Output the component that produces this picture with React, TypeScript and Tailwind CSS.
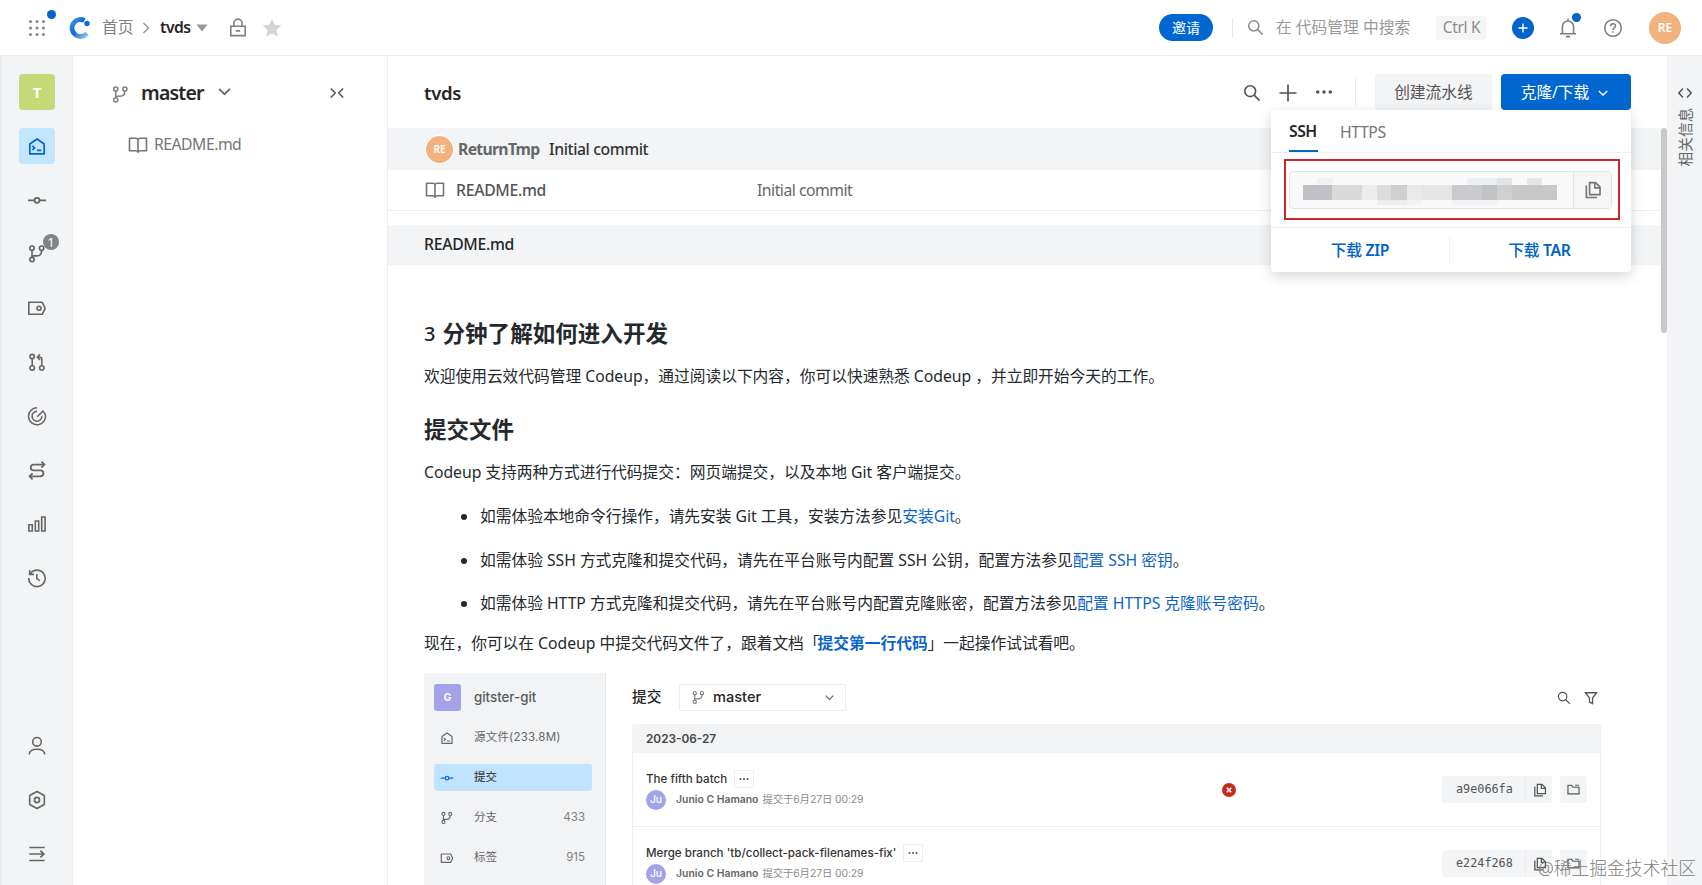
import type { ReactNode } from "react";

type IconProps = { className?: string };

const Svg = ({ className, box = 20, sw = 1.6, children }: { className?: string; box?: number; sw?: number; children: ReactNode }) => (
    <svg
        viewBox={`0 0 ${box} ${box}`}
        className={`shrink-0 ${className ?? "size-5"}`}
        fill="none"
        stroke="currentColor"
        strokeWidth={sw}
    >
        {children}
    </svg>
);

const BranchIcon = ({ className }: IconProps) => (
    <Svg className={className}>
        <circle cx="5" cy="4.2" r="2.2" />
        <circle cx="14.6" cy="4.2" r="2.2" />
        <circle cx="5" cy="15.6" r="2.2" />
        <path d="M5 6.4v7M14.6 6.4c0 3.6-2 5.5-5 5.5H5" />
    </Svg>
);

const HomeIcon = ({ className }: IconProps) => (
    <Svg className={className} sw={1.7}>
        <path d="M2.8 8 10 3l7.2 5v9.8H2.8z" strokeLinejoin="round" />
        <path d="m5.4 9.8 2.2 2.1-2.2 2.1M10 14.3h4.2" />
    </Svg>
);

const CommitIcon = ({ className }: IconProps) => (
    <Svg className={className} sw={1.8}>
        <circle cx="10" cy="10.3" r="2.5" />
        <path d="M1 10.3h6.5M12.5 10.3H19" />
    </Svg>
);

const TagIcon = ({ className }: IconProps) => (
    <Svg className={className}>
        <path d="M1.8 4.3h13.4l3 6-3 6H1.8z" strokeLinejoin="round" />
        <circle cx="12" cy="10.3" r="2" />
    </Svg>
);

const MergeIcon = () => (
    <Svg>
        <circle cx="5.2" cy="4.6" r="2.2" />
        <circle cx="5.2" cy="16" r="2.2" />
        <circle cx="14.8" cy="16" r="2.2" />
        <path d="M5.2 6.8v7M14.8 13.8V7.3q0-2-2-2H11M13 2.4l-2.6 2.9L13 8" />
    </Svg>
);

const TargetIcon = () => (
    <Svg>
        <path d="M10 1.8a8.5 8.5 0 1 0 8.3 6.6l-2.4-3.3-5.7 5.6" />
        <path d="M10 5.4a4.9 4.9 0 1 0 4.9 4.9" />
    </Svg>
);

const SwapIcon = () => (
    <Svg sw={1.8}>
        <path d="M17 4.6H6.6a2.8 2.8 0 0 0 0 5.7h6.8a3 3 0 0 1 0 6H3" />
        <path d="m14.4 1.6 3 3-3 3M5.6 13.3l-3 3 3 3" />
    </Svg>
);

const BarsIcon = () => (
    <Svg>
        <path d="M1.9 10.8h3.4v6.2H1.9zM8.3 7h3.4v10H8.3zM14.7 3h3.4v14h-3.4z" />
    </Svg>
);

const HistoryIcon = () => (
    <Svg>
        <path d="M3.3 5.6A8.2 8.2 0 1 1 1.8 10M2.6 2v4.4H7" />
        <path d="M9.8 6v4.6l3 2" />
    </Svg>
);

const UserIcon = () => (
    <Svg>
        <circle cx="10" cy="5.8" r="4.3" />
        <path d="M2.2 18.4c.4-3.6 3.4-5.2 7.8-5.2s7.4 1.6 7.8 5.2" />
    </Svg>
);

const HexIcon = () => (
    <Svg>
        <path d="m10 1.5 7.3 4v9l-7.3 4-7.3-4v-9z" strokeLinejoin="round" />
        <circle cx="10" cy="10" r="2.6" />
    </Svg>
);

const ExpandIcon = () => (
    <Svg sw={1.7}>
        <path d="M2.3 3.5h15.4M2.3 10h14M2.3 16.5h15.4M13.4 6.6l3.4 3.4-3.4 3.4" />
    </Svg>
);

const BookIcon = ({ className }: IconProps) => (
    <Svg className={className}>
        <path d="M10 4.5Q9.4 3.2 8 3.2H1.5v12.6H8q1.2 0 2 1.4.8-1.4 2-1.4h6.5V3.2H12q-1.4 0-2 1.3zv12.5" strokeLinejoin="round" />
    </Svg>
);

const SearchIcon = ({ className }: IconProps) => (
    <Svg className={className} sw={1.8}>
        <circle cx="8" cy="8" r="6" />
        <path d="m12.4 12.4 6 6" />
    </Svg>
);

const ChevronDown = ({ className }: IconProps) => (
    <Svg className={className} box={12}>
        <path d="m1 3.500 5 5 5-5" />
    </Svg>
);

const CopyIcon = ({ className }: IconProps) => (
    <Svg className={className} sw={1.8}>
        <path d="M6.2 1.8h6.6l5 5v8.4H6.2z" />
        <path d="M12 2v5.6h5.6M2.6 5v13.4h11.8" />
    </Svg>
);

const FolderIcon = ({ className }: IconProps) => (
    <Svg className={className} sw={1.8}>
        <path d="M1.5 3.500h5.500l2.300 3H18.500v10.300h-17zM12.500 3.500h6" />
    </Svg>
);

const DotsIcon = ({ className }: IconProps) => (
    <Svg className={className}>
        <g fill="currentColor" stroke="none">
            <circle cx="3" cy="10" r="2" />
            <circle cx="10" cy="10" r="2" />
            <circle cx="17" cy="10" r="2" />
        </g>
    </Svg>
);

const LogoIcon = () => (
    <svg viewBox="0 0 22 22" className="size-[22px] shrink-0" fill="none">
        <defs>
            <linearGradient id="ring" x1="0" y1="0" x2="1" y2="1">
                <stop offset="0" stopColor="#3c96e8" />
                <stop offset=".45" stopColor="#1268cc" />
                <stop offset="1" stopColor="#8fc4f5" />
            </linearGradient>
        </defs>
        <path d="M15.500 3.500A8.500 8.500 0 1 0 18 16.500" stroke="url(#ring)" strokeWidth="4.800" />
        <circle cx="18" cy="6.500" r="2.700" fill="#0f6bd6" />
    </svg>
);

const dots = [3.5, 10, 16.5];

const TopBar = () => (
    <header className="flex h-14 shrink-0 items-center border-b border-[#ebecee] bg-white pl-[27px] pr-[21px]">
        <div className="relative flex size-5">
            <Svg>
                {dots.map((y) => dots.map((x) => (
                    <circle key={`${x}-${y}`} cx={x} cy={y} r="1.6" fill="#8c8c8c" stroke="none" />
                )))}
            </Svg>
            <span className="absolute left-[20px] top-[-8px] size-[9px] rounded-full bg-[#0064c8]" />
        </div>
        <div className="ml-[22px] flex"><LogoIcon /></div>
        <span className="ml-[11px] w-8 text-[#808080]">首页</span>
        <Svg className="ml-[6px] size-3 text-[#999]" box={12} sw={1.5}><path d="m3.500 1 5 5-5 5" /></Svg>
        <span className="ml-[8px] w-[30px] font-semibold tracking-[-0.5px] text-[#262626]">tvds</span>
        <svg viewBox="0 0 12 8" className="ml-[6px] h-[8px] w-[12px] shrink-0"><path d="M.5.500h11L6 7.500z" fill="#999" /></svg>
        <Svg className="ml-[20px] size-5 text-[#808080]">
            <path d="M2.8 8.200h14.400v9.400H2.800zM6 8.200V5.100a4 4 0 0 1 8 0v3.100M7.800 12.900h4.400" />
        </Svg>
        <Svg className="ml-[14px] size-5">
            <path d="m10 .8 2.800 6 6.600.8-4.900 4.500 1.300 6.500-5.800-3.200-5.800 3.200 1.300-6.500L.6 7.600l6.600-.8z" fill="#d5d5d5" stroke="none" />
        </Svg>
        <button className="ml-auto flex h-[27px] w-[54px] items-center justify-center rounded-full bg-[#0067d1] text-[14px] text-white">邀请</button>
        <span className="ml-[19px] h-5 w-px bg-[#e6e6e6]" />
        <SearchIcon className="ml-[14px] size-[17px] text-[#8c8c8c]" />
        <span className="ml-[12px] w-[136px] text-[#999]">在 代码管理 中搜索</span>
        <span className="ml-[24px] flex h-6 w-[51px] items-center justify-center rounded bg-[#f5f5f6] text-[15.5px] tracking-[-0.3px] text-[#8c8c8c]">Ctrl K</span>
        <span className="ml-[25px] flex size-[22px] items-center justify-center rounded-full bg-[#0064c8] text-white">
            <Svg className="size-[10px]" box={10} sw={1.4}><path d="M5 .5v9M.5 5h9" /></Svg>
        </span>
        <span className="relative ml-[24px] flex">
            <Svg className="size-5 text-[#808080]">
                <path d="M4.400 15.800V8.600a5.600 5.600 0 0 1 11.200 0v7.200M2 15.800h16M10 3V.8M8 18.600h4" />
            </Svg>
            <span className="absolute left-[14px] top-[-5px] size-[9px] rounded-full bg-[#0064c8]" />
        </span>
        <Svg className="ml-[25px] size-5 text-[#808080]">
            <circle cx="10" cy="10" r="8.300" />
            <path d="M7.500 8.200c0-3.400 5-3.200 5-.3 0 2-2.500 1.800-2.500 4.200M10 13.200v1.600" />
        </Svg>
        <span className="ml-[26px] flex size-8 items-center justify-center rounded-full bg-[#f2b27e] text-[12px] font-semibold text-white">RE</span>
    </header>
);

const SideItem = ({ children, badge }: { children: ReactNode; badge?: string }) => (
    <div className="relative flex size-9 items-center justify-center text-[#666]">
        {children}
        {badge && (
            <span className="absolute left-[24px] top-[-2px] flex size-4 items-center justify-center rounded-full bg-[#808387] text-[13px] leading-none text-white">{badge}</span>
        )}
    </div>
);

const SideBar = () => (
    <nav className="flex w-[71px] shrink-0 flex-col items-center gap-[18px] border-r border-[#e8eaec] bg-[#f3f4f6] pb-[13px] pt-[18px]">
        <div className="flex size-9 items-center justify-center rounded bg-[#c5d977] text-[15px] font-bold text-white">T</div>
        <div className="flex size-9 items-center justify-center rounded bg-[#c2e6ff] text-[#0064c8]"><HomeIcon /></div>
        <SideItem><CommitIcon /></SideItem>
        <SideItem badge="1"><BranchIcon /></SideItem>
        <SideItem><TagIcon /></SideItem>
        <SideItem><MergeIcon /></SideItem>
        <SideItem><TargetIcon /></SideItem>
        <SideItem><SwapIcon /></SideItem>
        <SideItem><BarsIcon /></SideItem>
        <SideItem><HistoryIcon /></SideItem>
        <div className="mt-auto flex flex-col gap-[18px]">
            <SideItem><UserIcon /></SideItem>
            <SideItem><HexIcon /></SideItem>
            <SideItem><ExpandIcon /></SideItem>
        </div>
    </nav>
);

const FileTree = () => (
    <aside className="w-[315px] shrink-0 border-r border-[#eceef0] bg-white">
        <div className="flex h-[74px] items-center pl-[38px] pr-[43px]">
            <BranchIcon className="mt-[3px] size-[19px] text-[#808080]" />
            <span className="ml-[11px] w-[63px] text-[19.5px] font-semibold tracking-[-0.8px] text-[#262626]">master</span>
            <ChevronDown className="mb-[4px] ml-[14px] size-[13px] text-[#666]" />
            <Svg className="ml-auto size-[14px] text-[#555]" box={14} sw={1.5}><path d="m.8 2.500 4.500 4.500-4.500 4.500M13.200 2.500 8.700 7l4.500 4.500" /></Svg>
        </div>
        <div className="flex h-[30px] items-center pl-[55px] text-[#757575]">
            <BookIcon className="size-5" />
            <span className="ml-[6px] tracking-[-0.5px]">README.md</span>
        </div>
    </aside>
);

// censored ssh address
const mosaic = [
    { w: 29, c: "bg-[#bfc1c6]" },
    { w: 30, c: "bg-[#d9dadc]" },
    { w: 15, c: "bg-[#eceded]" },
    { w: 14, c: "bg-[#dcdcdd]" },
    { w: 16, c: "bg-[#cfcfd1]" },
    { w: 15, c: "bg-[#e9e9ea]" },
    { w: 30, c: "bg-[#e4e5e6]" },
    { w: 30, c: "bg-[#c9cacd]" },
    { w: 15, c: "bg-[#bfc3c6]" },
    { w: 15, c: "bg-[#cfcfd1]" },
    { w: 45, c: "bg-[#c6c7c9]" },
];

const ClonePopup = () => (
    <div className="absolute right-0 top-9 z-10 flex h-[162px] w-[360px] flex-col rounded-b bg-white shadow-[0_4px_14px_rgba(0,0,0,0.16)]">
        <div className="flex h-[43px] shrink-0 gap-[22px] border-b border-[#eceeef] pl-[18px]">
            <span className="flex h-[42px] w-[29px] items-center border-b-2 border-[#0064c8] pt-[4px] font-semibold tracking-[-0.5px] text-[#262626]">SSH</span>
            <span className="flex h-[42px] items-center pt-[3px] tracking-[-0.4px] text-[#757575]">HTTPS</span>
        </div>
        <div className="ml-[13px] mt-[6px] flex h-[61px] w-[336px] shrink-0 items-center border-2 border-[#d0252d] px-[3px]">
            <div className="flex h-[38px] w-[323px] rounded border border-[#e5e5e5] bg-[#f9f9f9]">
                <div className="flex flex-1 flex-col pl-[13px] pt-[6px]">
                    <div className="flex h-[7px]">
                        <i className="ml-[14px] w-[16px] bg-[#f1f1f2]" />
                        <i className="ml-[134px] w-[30px] bg-[#eeeff0]" />
                        <i className="w-[15px] bg-[#e3e4e5]" />
                        <i className="ml-[15px] w-[15px] bg-[#e6e6e7]" />
                    </div>
                    <div className="flex h-[15px]">
                        {mosaic.map((m, i) => (
                            <i key={i} className={m.c} style={{ width: m.w }} />
                        ))}
                    </div>
                    <div className="flex h-[5px]">
                        <i className="ml-[74px] w-[30px] bg-[#eeeeef]" />
                        <i className="w-[15px] bg-[#f3f3f4]" />
                        <i className="ml-[30px] w-[46px] bg-[#f2f2f3]" />
                    </div>
                </div>
                <div className="flex w-[38px] items-center justify-center border-l border-[#e5e5e5] bg-[#f5f6f7] text-[#757575]">
                    <CopyIcon className="size-[18px]" />
                </div>
            </div>
        </div>
        <div className="mt-[7px] flex flex-1 items-center border-t border-[#eff0f1] pt-px font-medium text-[#0064c8]">
            <span className="w-[178px] text-center tracking-[-0.3px]">下载 <b className="font-semibold">ZIP</b></span>
            <span className="h-7 w-px bg-[#eff0f1]" />
            <span className="w-[179px] text-center tracking-[-0.3px]">下载 <b className="font-semibold">TAR</b></span>
        </div>
    </div>
);

const RepoHeader = () => (
    <div className="flex h-[72px] shrink-0 items-center px-[36px]">
        <span className="pt-[2px] text-[18.5px] font-semibold tracking-[-0.3px] text-[#262626]">tvds</span>
        <SearchIcon className="ml-auto mt-px size-[18px] text-[#555]" />
        <Svg className="ml-[18px] mt-px size-[18px] text-[#555]" box={18} sw={1.7}><path d="M9 .5v17M.5 9h17" /></Svg>
        <DotsIcon className="ml-[18px] size-[18px] text-[#555]" />
        <span className="ml-[22px] h-7 w-px bg-[#ebebeb]" />
        <button className="ml-[19px] flex h-9 w-[117px] items-center justify-center rounded bg-[#f3f4f6] pt-px text-[#555]">创建流水线</button>
        <div className="relative ml-[9px]">
            <button className="flex h-9 w-[130px] items-center rounded bg-[#0067d1] pl-[18px] pt-px tracking-[-0.1px] text-white">
                <span className="w-[72px]">克隆/下载</span>
                <ChevronDown className="ml-[7px] size-[10px]" />
            </button>
            <ClonePopup />
        </div>
    </div>
);

const Link = ({ children }: { children: ReactNode }) => <a className="text-[#0b64c9]">{children}</a>;

const Bullet = ({ children }: { children: ReactNode }) => (
    <li className="flex h-6 items-center">
        <i className="mr-[13px] size-[6px] rounded-full bg-[#24292e]" />
        <span>{children}</span>
    </li>
);

const commits = [
    { title: "The fifth batch", hash: "a9e066fa", failed: true },
    { title: "Merge branch 'tb/collect-pack-filenames-fix'", hash: "e224f268", failed: false },
];

const PreviewMenu = () => (
    <div className="flex w-[182px] shrink-0 flex-col border-r border-[#e4e6e9] bg-[#f2f3f5] px-[10px] pt-[11px] text-[11.5px] text-[#666]">
        <div className="flex h-[27px] items-center">
            <span className="flex size-[27px] items-center justify-center rounded-[3px] bg-[#a5a3e8] text-[10px] font-bold text-white">G</span>
            <span className="ml-[13px] text-[13.3px] font-medium text-[#595959]">gitster-git</span>
        </div>
        <div className="mt-[13px] flex h-[27px] items-center pl-[6px] pt-px">
            <HomeIcon className="size-[14px]" />
            <span className="ml-[20px] tracking-[0.2px]">源文件(233.8M)</span>
        </div>
        <div className="mt-[13px] flex h-[27px] w-[158px] items-center rounded-[3px] bg-[#c0e4ff] pl-[6px] pt-px">
            <CommitIcon className="size-[14px] text-[#0b6cd8]" />
            <span className="ml-[20px] font-medium text-[#444]">提交</span>
        </div>
        <div className="mt-[13px] flex h-[27px] items-center pl-[6px] pr-[10px] pt-px">
            <BranchIcon className="size-[14px]" />
            <span className="ml-[20px]">分支</span>
            <span className="ml-auto text-[#808080]">433</span>
        </div>
        <div className="mt-[13px] flex h-[27px] items-center pl-[6px] pr-[10px] pt-px">
            <TagIcon className="size-[14px]" />
            <span className="ml-[20px]">标签</span>
            <span className="ml-auto text-[#808080]">915</span>
        </div>
    </div>
);

const Preview = () => (
    <div className="ml-[36px] mt-[18px] flex w-[1200px] flex-1 overflow-hidden font-[Inter,'Noto_Sans_CJK_SC',sans-serif] tracking-normal">
        <PreviewMenu />
        <div className="ml-[26px] flex w-[969px] flex-col pt-[11px]">
            <div className="flex h-[27px] items-center">
                <span className="w-[30px] text-[14.7px] font-medium text-[#262626]">提交</span>
                <div className="ml-[17px] flex h-[27px] w-[167px] items-center rounded-[2px] border border-[#ebebeb] bg-white px-[11px]">
                    <BranchIcon className="size-[15px] text-[#808080]" />
                    <span className="ml-[7px] text-[14.6px] font-medium text-[#262626]">master</span>
                    <ChevronDown className="ml-auto size-[9px] text-[#666]" />
                </div>
                <SearchIcon className="ml-auto size-[14px] text-[#555]" />
                <Svg className="ml-[13px] mr-[3px] size-[14px] text-[#555]" sw={1.8}>
                    <path d="M2 2.500h16L12.200 10v8l-4.400-2.400V10z" />
                </Svg>
            </div>
            <div className="mt-[13px] flex h-[29px] shrink-0 items-center rounded-t-[2px] bg-[#f2f3f5] pl-[14px] pt-[2px] text-[11.8px] font-semibold text-[#444]">2023-06-27</div>
            {commits.map((c) => (
                <div key={c.hash} className="flex h-[74px] shrink-0 items-center border-x border-b border-[#ebedef] pl-[13px] pr-[13px]">
                    <div className="w-[576px]">
                        <div className="flex h-[20px] items-center">
                            <span className="pt-[2px] text-[11.6px] font-medium text-[#333]">{c.title}</span>
                            <span className="ml-[7px] flex h-[18px] w-[20px] items-center justify-center border border-[#eee] text-[#555]">
                                <DotsIcon className="size-[10px]" />
                            </span>
                        </div>
                        <div className="flex h-[22px] items-center text-[10.4px] text-[#8c8c8c]">
                            <span className="flex size-5 items-center justify-center rounded-full bg-[#a5a3e8] font-medium text-white">Ju</span>
                            <span className="ml-[10px] pt-px font-semibold text-[#666]">Junio C Hamano</span>
                            <span className="ml-[4px] pt-px tracking-[-0.1px]">提交于6月27日 00:29</span>
                        </div>
                    </div>
                    {c.failed && (
                        <span className="flex size-[14px] items-center justify-center rounded-full bg-[#c62a1e] text-white">
                            <Svg className="size-[6px]" box={6} sw={1.6}><path d="m.8.8 4.400 4.400M5.200.8.8 5.200" /></Svg>
                        </span>
                    )}
                    <div className="ml-auto flex h-[27px] w-[110px] items-center rounded-[3px] bg-[#f3f4f6] text-[#555]">
                        <span className="w-[84px] border-r border-[#ebecee] pl-[14px] font-[DejaVu_Sans_Mono,monospace] text-[11.8px] leading-[27px]">{c.hash}</span>
                        <CopyIcon className="ml-[7px] size-[14px]" />
                    </div>
                    <div className="ml-[8px] flex size-[27px] items-center justify-center rounded-[3px] bg-[#f3f4f6] text-[#555]">
                        <FolderIcon className="size-[13px]" />
                    </div>
                </div>
            ))}
        </div>
    </div>
);

const Readme = () => (
    <article className="flex min-h-0 flex-1 flex-col whitespace-nowrap text-[#24292e]">
        <div className="pl-[36px] tracking-[-0.03px]">
            <h2 className="mt-[54px] flex h-[30px] items-center text-[22.5px] font-bold tracking-[0.05px]"><span className="mr-[7px] text-[20px] font-medium">3</span>分钟了解如何进入开发</h2>
            <p className="mt-[15px] h-6 leading-6">欢迎使用云效代码管理 Codeup，通过阅读以下内容，你可以快速熟悉 Codeup ，并立即开始今天的工作。</p>
            <h2 className="mt-[27px] flex h-[30px] items-center text-[22.5px] font-bold">提交文件</h2>
            <p className="mt-[15px] h-6 leading-6">Codeup 支持两种方式进行代码提交：网页端提交，以及本地 Git 客户端提交。</p>
            <ul className="mt-[21px] flex flex-col gap-[19.5px] pl-[37px]">
                <Bullet>如需体验本地命令行操作，请先安装 Git 工具，安装方法参见<Link>安装Git</Link>。</Bullet>
                <Bullet>如需体验 SSH 方式克隆和提交代码，请先在平台账号内配置 SSH 公钥，配置方法参见<Link>配置 SSH 密钥</Link>。</Bullet>
                <Bullet>如需体验 HTTP 方式克隆和提交代码，请先在平台账号内配置克隆账密，配置方法参见<Link>配置 HTTPS 克隆账号密码</Link>。</Bullet>
            </ul>
            <p className="mt-[15px] h-6 leading-6">现在，你可以在 Codeup 中提交代码文件了，跟着文档<span className="-mr-[2px]">「</span><Link><b>提交第一行代码</b></Link>」一起操作试试看吧。</p>
        </div>
        <Preview />
    </article>
);

const Main = () => (
    <main className="flex min-w-0 flex-1 flex-col bg-white">
        <RepoHeader />
        <div className="flex min-h-0 flex-1">
            <div className="flex min-w-0 flex-1 flex-col">
                <div className="flex h-[42px] shrink-0 items-center bg-[#f3f4f6] pl-[38px]">
                    <span className="flex size-[27px] items-center justify-center rounded-full bg-[#f2b27e] text-[10px] font-semibold text-white ring-1 ring-white">RE</span>
                    <span className="ml-[5px] w-[83px] pt-[2px] font-bold tracking-[-0.7px] text-[#666]">ReturnTmp</span>
                    <span className="ml-[8px] pt-[2px] font-medium tracking-[-0.4px] text-[#333]">Initial commit</span>
                </div>
                <div className="flex h-[41px] shrink-0 items-center border-b border-[#eceef0] pl-[37px]">
                    <BookIcon className="size-5 text-[#757575]" />
                    <span className="ml-[11px] w-[301px] pt-[2px] font-medium tracking-[-0.3px] text-[#555]">README.md</span>
                    <span className="pt-[2px] tracking-[-0.5px] text-[#666]">Initial commit</span>
                </div>
                <div className="mt-[14px] flex h-[40px] shrink-0 items-center bg-[#f3f4f6] pl-[36px] font-medium tracking-[-0.3px] text-[#262626]">README.md</div>
                <Readme />
            </div>
            <div className="w-[6px] shrink-0"><div className="h-[205px] rounded-full bg-[#c8c8c8]" /></div>
        </div>
    </main>
);

const InfoStrip = () => (
    <aside className="flex w-[35px] shrink-0 flex-col items-center bg-[#f3f4f6] pt-[30px] text-[#555]">
        <Svg className="size-[14px]" box={14} sw={1.5}><path d="M5 2.500.8 7 5 11.500M9 2.500 13.200 7 9 11.500" /></Svg>
        <div className="ml-px mt-[7px] flex h-[60px] w-5 items-center justify-center">
            <span className="-rotate-90 text-[14.7px] text-[#666]">相关信息</span>
        </div>
    </aside>
);

export default function App() {
    return (
        <div className="relative flex h-[885px] w-[1702px] flex-col overflow-hidden whitespace-nowrap font-['Noto_Sans','Noto_Sans_CJK_SC',sans-serif] text-[15.75px]">
            <TopBar />
            <div className="flex min-h-0 flex-1 border-l-2 border-[#eaecee]">
                <SideBar />
                <FileTree />
                <Main />
                <InfoStrip />
            </div>
            <span className="absolute bottom-[3px] right-[6px] text-[17.8px] font-light text-[#808080]">@稀土掘金技术社区</span>
        </div>
    );
}
